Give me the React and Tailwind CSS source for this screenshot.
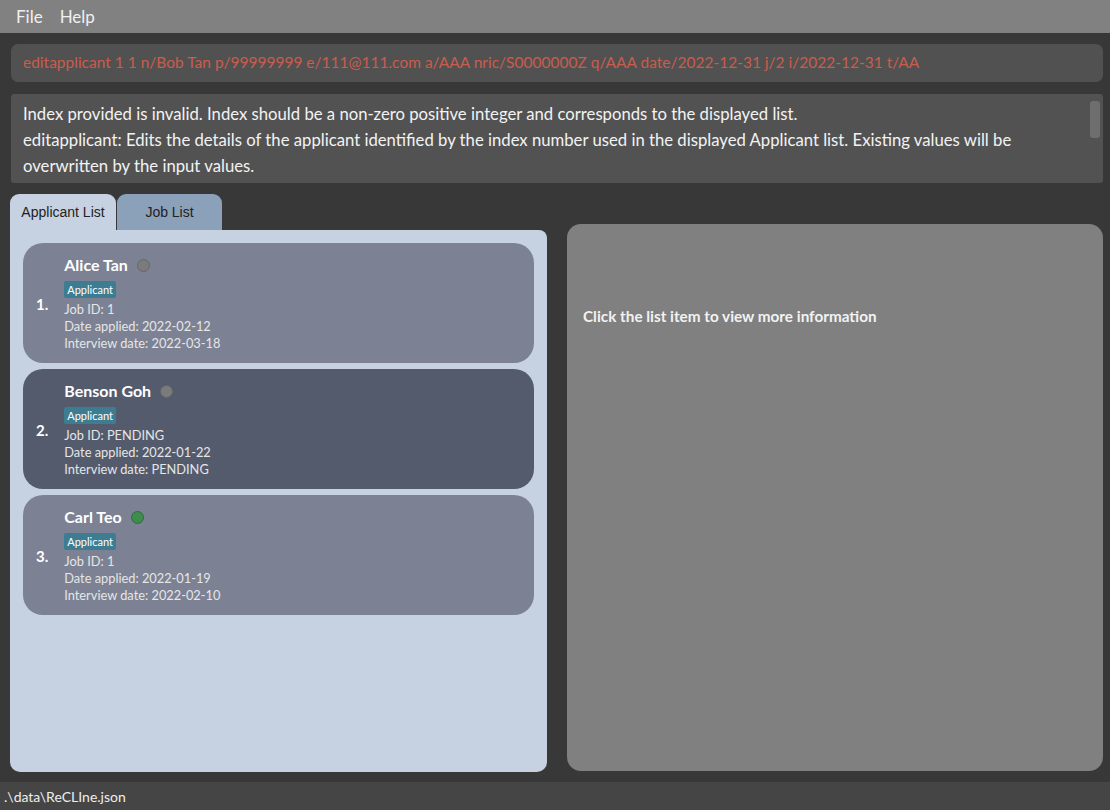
import React from "react";

const people = [
  { idx: "1.", name: "Alice Tan", job: "1", applied: "2022-02-12", interview: "2022-03-18", dark: false, green: false },
  { idx: "2.", name: "Benson Goh", job: "PENDING", applied: "2022-01-22", interview: "PENDING", dark: true, green: false },
  { idx: "3.", name: "Carl Teo", job: "1", applied: "2022-01-19", interview: "2022-02-10", dark: false, green: true },
];

function Card({ p }) {
  return (
    <div
      className={`flex items-center h-[120px] rounded-[20px] pl-[13px] ${p.dark ? "bg-[#535b6d]" : "bg-[#7c8294]"}`}
    >
      <div className="text-[15px] font-bold text-white mt-[2px] mr-[16px]">{p.idx}</div>
      <div className="flex flex-col pt-[1px]">
        <div className="flex items-center h-[20px]">
          <span className="text-[16px] font-bold text-white">{p.name}</span>
          <span
            className={`ml-[9px] w-[13px] h-[13px] rounded-full border ${p.green ? "bg-[#3f8c50] border-[#2f6b3c]" : "bg-[#7b7b7b] border-[#666666]"}`}
          />
        </div>
        <div className="mt-[6px] self-start bg-[#3e7c92] text-white text-[11px] leading-[17px] px-[3px] rounded-[2px]">
          Applicant
        </div>
        <div className="mt-[3px] text-[12.8px] leading-[17px] text-[#e6e6e6]">
          <div>Job ID: {p.job}</div>
          <div>Date applied: {p.applied}</div>
          <div>Interview date: {p.interview}</div>
        </div>
      </div>
    </div>
  );
}

export default function App() {
  return (
    <div
      className="w-[1110px] h-[810px] flex flex-col bg-[#383838] overflow-hidden"
      style={{ fontFamily: "Lato, 'Noto Sans', sans-serif" }}
    >
      <div className="h-[33px] bg-[#818181] flex items-center pl-[16px] gap-[17px] text-[17px] text-[#f0f0f0] shrink-0">
        <span>File</span>
        <span>Help</span>
      </div>

      <div className="flex-1 flex flex-col pl-[11px] pr-[7px] pt-[11px] min-h-0">
        <div className="h-[38px] bg-[#515151] rounded-[7px] flex items-center pl-[12px] text-[15.5px] text-[#c95d4d] shrink-0">
          editapplicant 1 1 n/Bob Tan p/99999999 e/111@111.com a/AAA nric/S0000000Z q/AAA date/2022-12-31 j/2 i/2022-12-31 t/AA
        </div>

        <div className="relative mt-[12px] h-[89px] bg-[#525252] rounded-[3px] pl-[12px] pr-[30px] pt-[7px] text-[16.7px] leading-[26px] text-[#f2f2f2] shrink-0">
          <div>Index provided is invalid. Index should be a non-zero positive integer and corresponds to the displayed list.</div>
          <div>
            editapplicant: Edits the details of the applicant identified by the index number used in the displayed Applicant list. Existing values will be overwritten by the input values.
          </div>
          <div className="absolute right-[3px] top-[7px] w-[10px] h-[37px] rounded-[3px] bg-[#6e6e6e]" />
        </div>

        <div className="flex mt-[11px] flex-1 min-h-0 pb-[10px] ml-[-1px]">
          <div className="flex flex-col w-[537px] shrink-0">
            <div className="flex h-[36px] gap-[1px]" style={{ fontFamily: "'Liberation Sans', Arial, sans-serif" }}>
              <div className="w-[106px] bg-[#c6d2e1] rounded-t-[9px] flex items-center justify-center text-[14px] text-[#222]">
                Applicant List
              </div>
              <div className="w-[105px] bg-[#8ba0b9] rounded-t-[9px] flex items-center justify-center text-[14px] text-[#222]">
                Job List
              </div>
            </div>
            <div className="flex-1 bg-[#c6d2e1] rounded-tr-[8px] rounded-b-[10px] p-[13px] flex flex-col gap-[6px]">
              {people.map((p) => (
                <Card key={p.idx} p={p} />
              ))}
            </div>
          </div>

          <div className="ml-[20px] mt-[30px] w-[536px] shrink-0 mb-[1px] bg-[#808080] rounded-[14px] pl-[16px] pt-[81px]">
            <div className="text-[15.3px] font-bold text-[#f2f2f2]">Click the list item to view more information</div>
          </div>
        </div>
      </div>

      <div className="h-[28px] bg-[#454545] flex items-center pl-[4px] text-[14px] text-[#eeeeee] shrink-0">
        .\data\ReCLIne.json
      </div>
    </div>
  );
}
